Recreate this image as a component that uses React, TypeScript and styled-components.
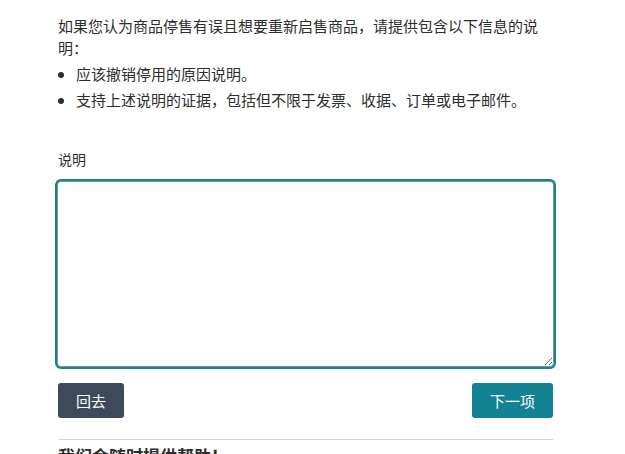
import styled, { createGlobalStyle } from 'styled-components';

const Global = createGlobalStyle`
  html, body {
    margin: 0;
    padding: 0;
    background: #ffffff;
  }
  body {
    font-family: "Noto Sans CJK SC", "Noto Sans", sans-serif;
    color: #2d2d2d;
  }
`;

const Page = styled.div`
  width: 495px;
  margin-left: 58px;
  padding-top: 15px;
  font-size: 15px;
`;

const Intro = styled.p`
  margin: 0;
  line-height: 22px;
`;

const List = styled.ul`
  margin: 4px 0 0;
  padding-left: 18px;
  line-height: 22px;
`;

const Item = styled.li`
  margin-bottom: 4px;
`;

const Label = styled.label`
  display: block;
  margin-top: 37px;
  font-size: 14px;
  line-height: 22px;
`;

const TextArea = styled.textarea`
  display: block;
  box-sizing: border-box;
  width: 497px;
  height: 186px;
  margin: 11px 0 0 -1px;
  border: 1px solid #8a8f96;
  border-radius: 4px;
  outline: none;
  box-shadow: 0 0 0 2px #128493;
  font: inherit;
  resize: vertical;
`;

const Actions = styled.div`
  display: flex;
  justify-content: space-between;
  margin-top: 16px;
`;

const Button = styled.button<{ $primary?: boolean }>`
  height: 35px;
  padding: 0 18px;
  border: none;
  border-radius: 3px;
  background: ${({ $primary }) => ($primary ? '#138394' : '#3e4a59')};
  color: #ffffff;
  font-family: inherit;
  font-size: 15px;
  cursor: pointer;
`;

const Divider = styled.hr`
  margin: 21px 0 0;
  border: none;
  border-top: 1px solid #d5d5d7;
`;

const Heading = styled.h2`
  margin: 4px 0 0;
  font-size: 17px;
  font-weight: 700;
  line-height: 24px;
`;

export default function App() {
  return (
    <>
      <Global />
      <Page>
        <Intro>如果您认为商品停售有误且想要重新启售商品，请提供包含以下信息的说明：</Intro>
        <List>
          <Item>应该撤销停用的原因说明。</Item>
          <Item>支持上述说明的证据，包括但不限于发票、收据、订单或电子邮件。</Item>
        </List>
        <Label htmlFor="explanation">说明</Label>
        <TextArea id="explanation" autoFocus />
        <Actions>
          <Button>回去</Button>
          <Button $primary>下一项</Button>
        </Actions>
        <Divider />
        <Heading>我们会随时提供帮助！</Heading>
      </Page>
    </>
  );
}
